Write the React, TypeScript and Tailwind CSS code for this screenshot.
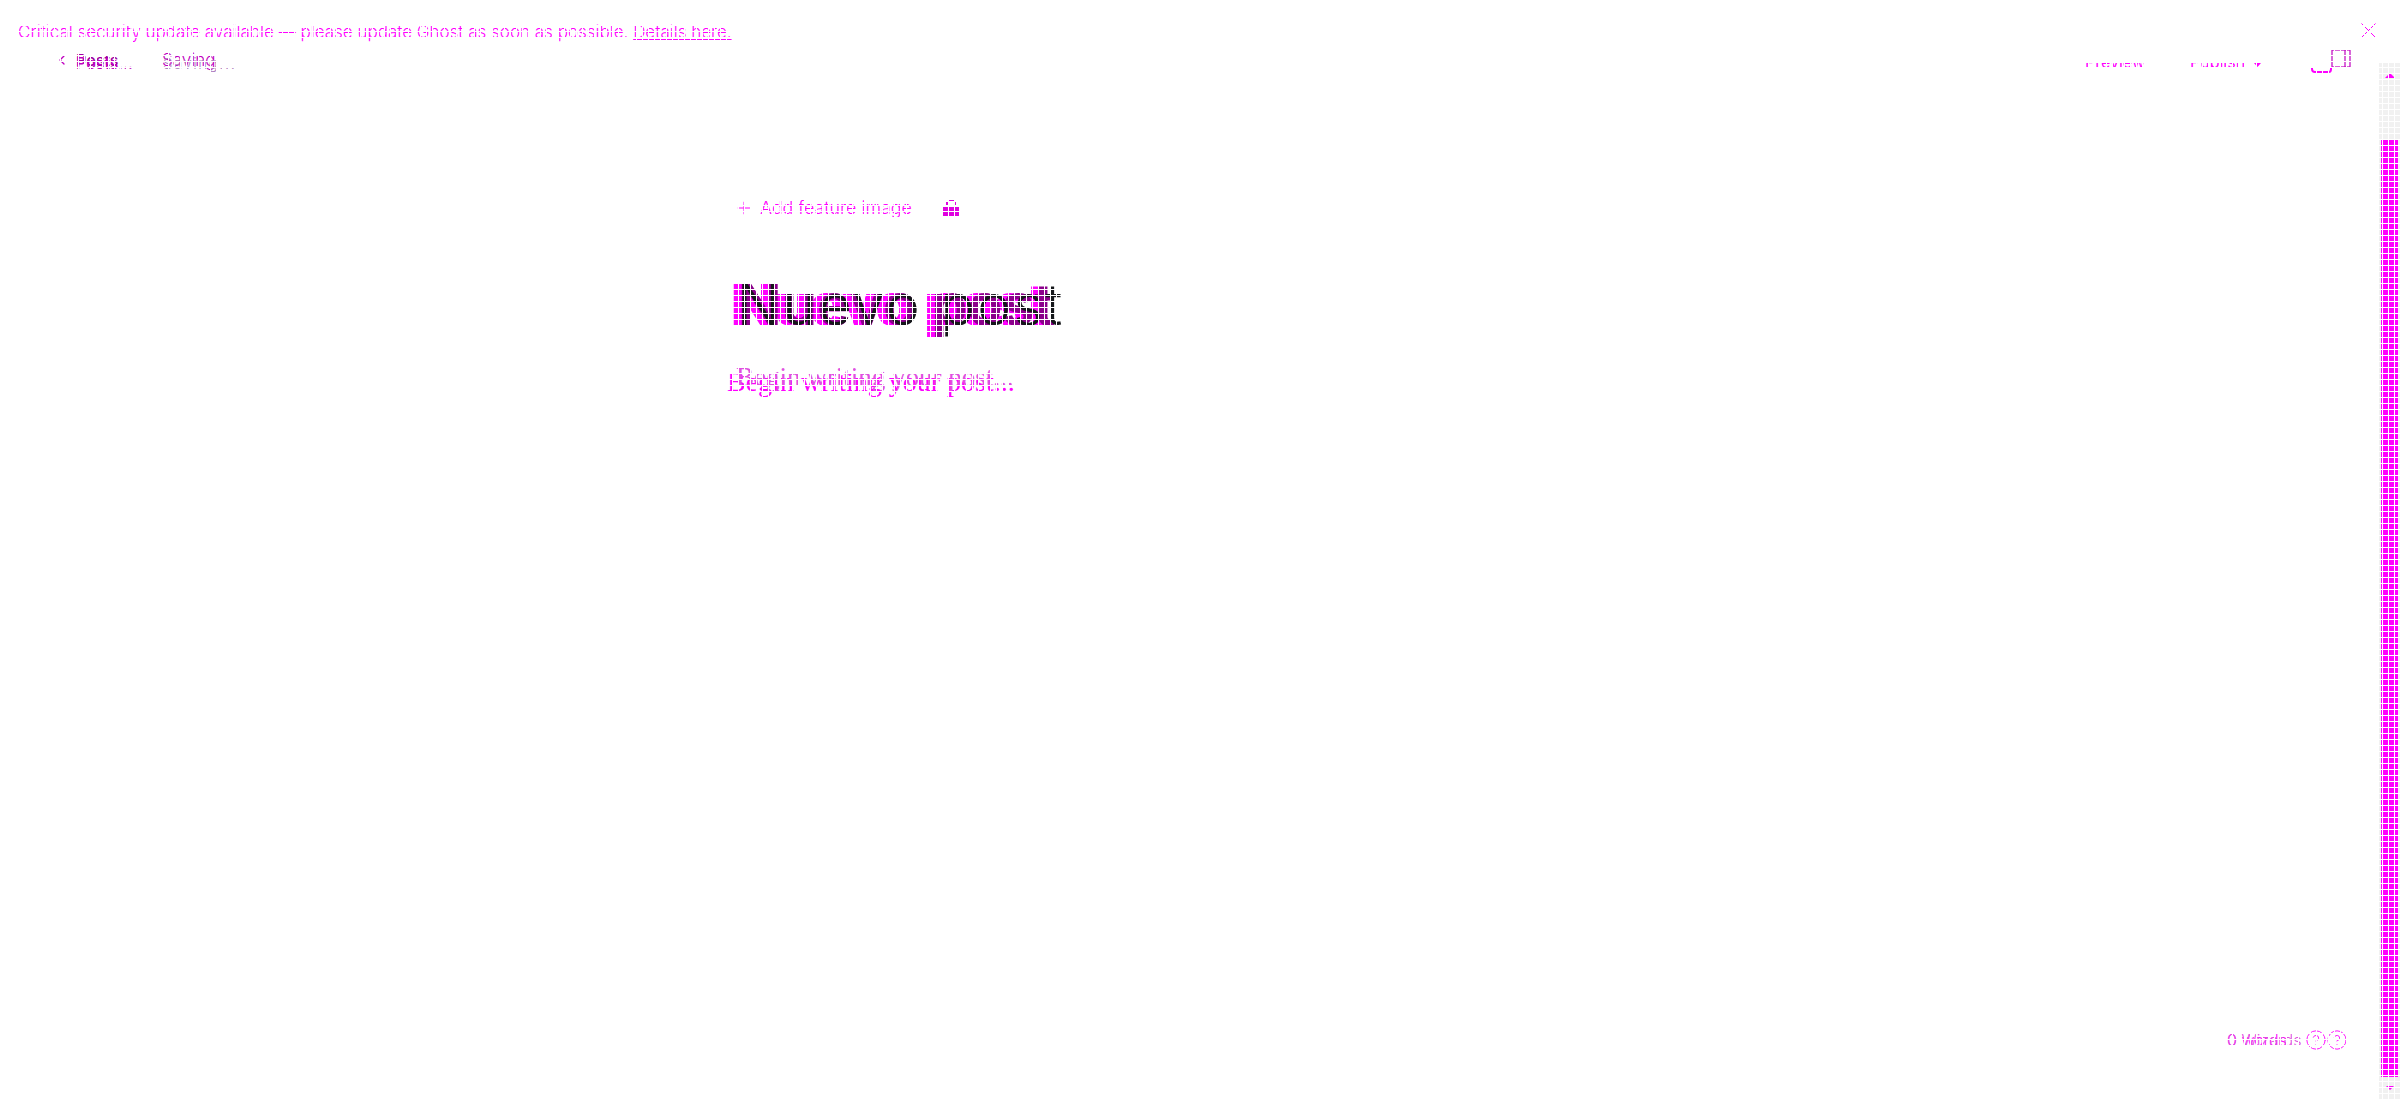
import { Plus, ChevronLeft, HelpCircle } from "lucide-react"

const MAGENTA = "text-[#ff00ff]"

// two slightly shifted copies of the same label, one sits over the other
const Doubled: React.FC<{ top: string; under: string; className: string; offset: string }> = ({ top, under, className, offset }) => (
  <span className={`relative inline-block whitespace-nowrap ${className}`}>
    <span>{top}</span>
    <span className={`absolute left-0 top-0 ${offset}`}>{under}</span>
  </span>
)

const App: React.FC = () => {
  return (
    <div className="relative h-[1099px] w-[2400px] overflow-hidden bg-white font-['Inter',sans-serif]">
      {/* banner */}
      <div className="flex h-[44px] items-end justify-between pl-[18px] pr-[24px]">
        <p className={`text-[17px] font-light leading-[24px] ${MAGENTA}`}>
          Critical security update available — please update Ghost as soon as possible.{" "}
          <a className="underline">Details here.</a>
        </p>
        <svg className="mb-[6px]" width="15" height="15" viewBox="0 0 15 15" fill="none">
          <path d="M0.5 0.5l14 14M14.5 0.5l-14 14" stroke="#ff00ff" strokeWidth="1" />
        </svg>
      </div>

      {/* toolbar */}
      <div className="flex h-[27px] items-start justify-between pl-[54px] pr-[48px]">
        <div className="flex items-center gap-[30px] pt-[6px]">
          <div className="flex items-center gap-[6px]">
            <ChevronLeft className="text-[#c000c0]" size={16} strokeWidth={2} />
            <Doubled top="Posts" under="Posts..." className="w-[56px] text-[16px] font-medium leading-[20px] text-[#a000a0]" offset="translate-y-[3px] text-[#c000c0]" />
          </div>
          <Doubled top="Saving" under="Saving..." className="w-[68px] text-[17px] font-light leading-[20px] text-[#c000c0]" offset="translate-x-[1px] translate-y-[4px] text-[14.8px] text-[#b080c0] tracking-[1.6px]" />
        </div>
        <div className="flex items-start">
          <span className={`mt-[19px] h-[4px] w-[62px] translate-x-[2px] overflow-hidden text-[16px] leading-[4px] ${MAGENTA}`}>
            <span className="block -translate-y-[3px]">Preview</span>
          </span>
          <span className={`ml-[45px] mt-[19px] flex h-[4px] w-[72px] items-start overflow-hidden text-[16px] leading-[4px] ${MAGENTA}`}>
            <span className="block -translate-y-[3px]">Publish</span>
            <svg className="ml-[9px]" width="7" height="4" viewBox="0 0 7 4">
              <path d="M0 0h7L3.5 4z" fill="#ff00ff" />
            </svg>
          </span>
          <svg className="ml-[48px] mt-[5px]" width="42" height="24" viewBox="0 0 42 24" fill="none">
            <path d="M2 18v2q0 3 3 3h14q2 0 2-3v-2" stroke="#ff00ff" strokeWidth="2" />
            <rect x="22" y="1" width="18" height="17" stroke="#c000c0" strokeWidth="1.2" />
            <path d="M35 1v17" stroke="#c000c0" strokeWidth="1.2" />
          </svg>
        </div>
      </div>

      {/* editor */}
      <div className="ml-[730px] w-[900px] pt-[124px]">
        <div className={`flex items-center text-[17.8px] font-light ${MAGENTA}`}>
          <Plus className="ml-[4px]" size={20} strokeWidth={1.2} />
          <span className="ml-[6px]">Add feature image</span>
          <svg className="ml-[30px]" width="18" height="18" viewBox="0 0 18 18">
            <path d="M6 0h6v2H6zM4 3h2v4H4zM12 3h2v4h-2zM1 8h16v9H1z" fill="#e000e0" />
          </svg>
        </div>

        <h1 className="mt-[48px] text-[57px] font-bold leading-[70px]">
          <span className="relative inline-block whitespace-nowrap text-[#ff00ff]">
            <span>Nuevo post</span>
            <span className="absolute left-0 top-0 translate-x-[8px] text-[#8b008b]">Nuevo post</span>
            <span className="absolute left-0 top-0 translate-x-[7px] font-light tracking-[2.4px] text-[#15171a]">Nuevo post</span>
          </span>
        </h1>

        <div className="mt-[16px] h-[40px] font-['Liberation_Serif',serif] leading-[34px]">
          <span className="relative block whitespace-nowrap">
            <span className="absolute left-[-3px] top-[9px] text-[28px] text-[#ff00ff]">Begin writing your post...</span>
            <span className="absolute left-[6px] top-[4px] text-[27px] text-[#e050e0]">Begin writing your post...</span>
          </span>
        </div>
      </div>

      {/* word count */}
      <div className="absolute bottom-[48px] right-[52px] flex items-center">
        <Doubled top="0 words" under="0 Wizards" className="w-[78px] text-[16px] font-light leading-[20px] text-[#ff00ff]" offset="text-[#e050e0]" />
        <HelpCircle className={MAGENTA} size={22} strokeWidth={1} />
        <HelpCircle className={`ml-[-1px] ${MAGENTA}`} size={22} strokeWidth={1} />
      </div>

      {/* scrollbar */}
      <div className="absolute bottom-0 right-0 top-[63px] flex w-[21px] flex-col items-center bg-[#f1f1f1]">
        <div className="mt-[10px] h-0 w-0 border-x-[5px] border-b-[5px] border-x-transparent border-b-[#ff00ff]" />
        <div className="mt-[61px] h-[938px] w-[17px] bg-[#ff00ff]" />
        <div className="mt-[9px] h-0 w-0 border-x-[4px] border-t-[4px] border-x-transparent border-t-[#ff00ff]" />
      </div>

      {/* white lattice over everything */}
      <div className="pointer-events-none absolute inset-0 bg-[linear-gradient(to_right,#fff_1px,transparent_1px),linear-gradient(to_bottom,#fff_1px,transparent_1px)] bg-[size:6px_6px] bg-[position:0_1px]" />
    </div>
  )
}

export default App
